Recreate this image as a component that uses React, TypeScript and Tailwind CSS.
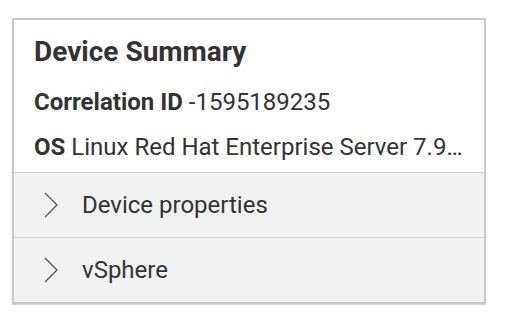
const rows = ["Device properties", "vSphere"]

function Chevron() {
  return (
    <svg width="14" height="26" viewBox="0 0 14 26" fill="none" className="shrink-0 text-[#555]">
      <path d="M1 1l12 12L1 25" stroke="currentColor" strokeWidth="1.3" />
    </svg>
  )
}

export default function App() {
  return (
    <div className="min-h-screen bg-white pl-3 pt-[18px] font-['Roboto',sans-serif] text-[#333]">
      <div className="w-[474px] border-2 border-[#c8c8c8] shadow-[0_1px_1px_rgba(0,0,0,0.15)]">
        <div className="h-[152px] overflow-hidden px-5 pt-4">
          <h2 className="text-[28px] font-bold leading-[32px]">Device Summary</h2>
          <div className="mt-5 text-[24px] leading-[28px]">
            <span className="font-bold">Correlation ID</span> -1595189235
          </div>
          <div className="mt-[17px] truncate text-[24px] leading-[28px]">
            <span className="font-bold">OS</span> Linux Red Hat Enterprise Server 7.9 (Maipo)
          </div>
        </div>
        {rows.map(label => (
          <div
            key={label}
            className="flex h-[65px] items-center gap-[24px] border-t border-[#d2d2d2] bg-[#f0f2f1] pl-[30px]"
          >
            <Chevron />
            <span className="text-[24px] leading-none">{label}</span>
          </div>
        ))}
      </div>
    </div>
  )
}
